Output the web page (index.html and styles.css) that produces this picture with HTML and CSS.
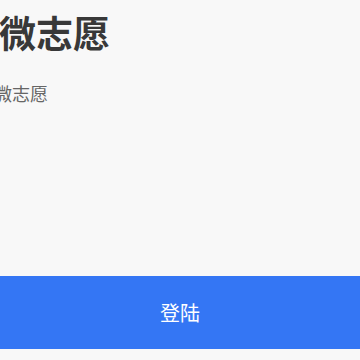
FILE: index.html
```html
<!DOCTYPE html>
<html lang="zh-CN">
<head>
    <meta charset="UTF-8" />
    <meta name="viewport" content="width=device-width, initial-scale=1.0">
    <title>微志愿</title>
    <link rel="stylesheet" href="styles.css">
</head>
<body>
<div class="page">
    <div class="header">
        <h1 class="title">微志愿</h1>
        <p class="subtitle">微志愿</p>
    </div>
    <div class="spacer"></div>
    <button class="login-btn">登陆</button>
</div>
</body>
</html>
```

FILE: styles.css
```css
* {
    box-sizing: border-box;
    margin: 0;
    padding: 0;
}
html, body {
    background: #f8f8f8;
    font-family: "Noto Sans CJK SC", "Noto Sans", sans-serif;
}
.page {
    display: flex;
    flex-direction: column;
    height: 360px;
}
.header {
    padding-top: 8px;
}
.title {
    font-size: 37px;
    font-weight: bold;
    color: #383838;
    line-height: 48px;
    margin-left: -1px;
}
.subtitle {
    font-size: 18px;
    color: #666666;
    line-height: 26px;
    margin-top: 24px;
    margin-left: -6px;
}
.spacer {
    flex-grow: 1;
}
.login-btn {
    display: block;
    width: 100%;
    height: 73px;
    margin-bottom: 11px;
    border: none;
    background: #3476f4;
    color: #ffffff;
    font-family: "Noto Sans CJK SC", "Noto Sans", sans-serif;
    font-size: 20px;
}
```
